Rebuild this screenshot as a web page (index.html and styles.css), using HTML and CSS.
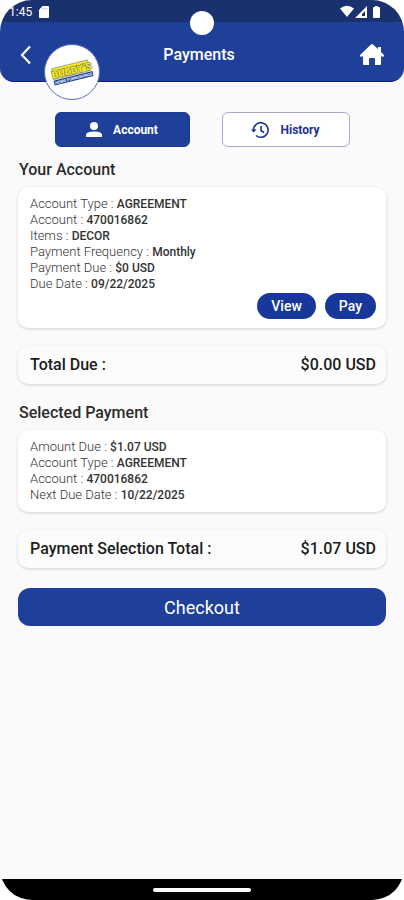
FILE: index.html
```html
<!DOCTYPE html>
<html lang="en">
<head>
<meta charset="utf-8">
<meta name="viewport" content="width=device-width, initial-scale=1">
<title>Payments</title>
<link rel="stylesheet" href="styles.css">
</head>
<body>
<div class="screen">
  <div class="status">
    <span class="clock">1:45</span>
    <svg class="sd" width="10" height="12" viewBox="0 0 11 13" aria-hidden="true"><path fill="#fff" d="M4 0h6q1 0 1 1v11q0 1-1 1H1q-1 0-1-1V4z"/><path stroke="#b3bdd6" d="M4.500 2v2M6.500 2v2M8.500 2v2"/></svg>
    <svg class="signals" width="42" height="14" viewBox="0 0 42 14" aria-hidden="true">
      <path fill="#fff" d="M0 3.500Q7-2 14 3.500L7 12z"/>
      <path fill="#fff" fill-rule="evenodd" d="M15 13 27 1v12zM22 11h3V6l-3 3z"/>
      <path fill="#fff" d="M35 1h3v1h1q1 0 1 1v9q0 1-1 1h-5q-1 0-1-1V3q0-1 1-1h1z"/>
    </svg>
  </div>
  <span class="camera"></span>
  <header class="bar">
    <button class="icon-btn" type="button" aria-label="Back"><svg width="12" height="20" viewBox="0 0 12 20"><path d="M10 1.500 2 10l8 8.500" fill="none" stroke="#fff" stroke-width="2.200"/></svg></button>
    <h1>Payments</h1>
    <button class="icon-btn" type="button" aria-label="Home"><svg width="24" height="22" viewBox="0 0 24 22"><path fill="#fff" d="M11 .5q1-.8 2 0L18 5V3h3v5l3 3v1.500h-3V20q0 1-1 1h-5v-6q0-1-1-1h-4q-1 0-1 1v6H4q-1 0-1-1v-7.500H0V11z"/></svg></button>
    <div class="logo">
      <svg width="54" height="54" viewBox="0 0 54 54" role="img" aria-label="Buddy's Home Furnishings">
        <g transform="rotate(-14 27 27)">
          <path fill="#183a91" d="M7 31h40v5H7z"/>
          <path fill="#f4e91c" stroke="#9297a0" stroke-width=".8" d="M8 19h37v11H8z"/>
          <text class="brand" x="27" y="29" text-anchor="middle">BUDDY’S</text>
          <text class="tag" x="27" y="35" text-anchor="middle">HOME FURNISHINGS</text>
        </g>
      </svg>
    </div>
  </header>

  <main>
    <nav class="tabs" aria-label="Payment views">
      <button class="tab active" type="button"><svg width="16" height="16" viewBox="0 0 16 16" aria-hidden="true"><circle cx="8" cy="4" r="4" fill="#fff"/><path fill="#fff" d="M0 15v-2q0-3.500 8-3.500t8 3.500v2z"/></svg>Account</button>
      <button class="tab" type="button"><svg width="18" height="18" viewBox="0 0 18 18" aria-hidden="true"><path fill="none" stroke="#1d2f91" stroke-width="1.600" d="M2.500 9A7.300 7.300 0 1 1 5 14.500M10 5v4.500l3 2"/><path fill="#1d2f91" d="M0 8.500h5.500L2.700 11.500z"/></svg>History</button>
    </nav>

    <h2>Your Account</h2>
    <section class="card">
      <dl>
        <div><dt>Account Type :</dt> <dd>AGREEMENT</dd></div>
        <div><dt>Account :</dt> <dd>470016862</dd></div>
        <div><dt>Items :</dt> <dd>DECOR</dd></div>
        <div><dt>Payment Frequency :</dt> <dd>Monthly</dd></div>
        <div><dt>Payment Due :</dt> <dd>$0 USD</dd></div>
        <div><dt>Due Date :</dt> <dd>09/22/2025</dd></div>
      </dl>
      <div class="actions">
        <button class="pill" type="button">View</button>
        <button class="pill" type="button">Pay</button>
      </div>
    </section>
    <section class="card total"><span>Total Due :</span><span>$0.00 USD</span></section>

    <h2>Selected Payment</h2>
    <section class="card">
      <dl>
        <div><dt>Amount Due :</dt> <dd>$1.07 USD</dd></div>
        <div><dt>Account Type :</dt> <dd>AGREEMENT</dd></div>
        <div><dt>Account :</dt> <dd>470016862</dd></div>
        <div><dt>Next Due Date :</dt> <dd>10/22/2025</dd></div>
      </dl>
    </section>
    <section class="card total"><span>Payment Selection Total :</span><span>$1.07 USD</span></section>
    <button class="checkout" type="button">Checkout</button>
  </main>

  <div class="home-area"><span class="handle"></span></div>
</div>
</body>
</html>
```

FILE: styles.css
```css
* { box-sizing: border-box; }
body {
  margin: 0;
  background: #fff;
  color: #1c1c1c;
  font-family: Roboto, "Liberation Sans", sans-serif;
}
button { border: 0; padding: 0; font-family: inherit; cursor: pointer; }
h1, h2, dl, dd { margin: 0; }
svg { display: block; flex: none; }

.screen {
  position: relative;
  display: flex;
  flex-direction: column;
  min-height: 100vh;
  overflow: hidden;
  border-radius: 32px;
  background: #fafafa;
}
.status {
  display: flex;
  align-items: center;
  height: 22px;
  padding: 2px 22px 0 9px;
  background: #19316e;
  color: #fff;
}
.clock { font-size: 12px; line-height: 16px; }
.sd { margin-left: 7px; }
.signals { margin-left: auto; }
.camera {
  position: absolute;
  top: 11px;
  left: 50%;
  z-index: 2;
  width: 24px;
  height: 24px;
  margin-left: -12px;
  border-radius: 50%;
  background: #fff;
}
.bar {
  position: relative;
  display: flex;
  align-items: center;
  justify-content: space-between;
  height: 60px;
  padding: 6px 20px 0;
  border-bottom: 1px solid #10188c;
  border-radius: 0 0 14px 14px;
  background: #1e4098;
  color: #fff;
}
.icon-btn { display: flex; justify-content: center; background: none; }
h1 {
  position: absolute;
  left: 0;
  right: 6px;
  text-align: center;
  font-size: 16px;
  font-weight: 500;
  line-height: 20px;
  pointer-events: none;
}
.logo {
  position: absolute;
  top: 22px;
  left: 44px;
  width: 56px;
  height: 56px;
  overflow: hidden;
  border: 1px solid #5a6db0;
  border-radius: 50%;
  background: #fff;
}
.brand { font: 900 10px Roboto, sans-serif; fill: #f4e91c; stroke: #666b62; stroke-width: 1px; paint-order: stroke; }
.tag { font: 700 4px Roboto, sans-serif; fill: #fff; }

main { flex: 1; padding: 30px 18px 24px; }
.tabs { display: flex; justify-content: center; gap: 32px; margin-bottom: 12px; }
.tab {
  display: flex;
  align-items: center;
  justify-content: center;
  gap: 11px;
  width: 128px;
  height: 35px;
  border: 1px solid #a6abcf;
  border-radius: 6px;
  background: #fff;
  color: #1d2f91;
  font-size: 12px;
  font-weight: 700;
}
.tab.active { width: 135px; border-color: #1a3a97; background: #1e4098; color: #fff; }

h2 {
  margin-bottom: 6px;
  padding-left: 1px;
  font-size: 16px;
  font-weight: 500;
  line-height: 22px;
  color: #2b2b2b;
}
.card {
  margin-bottom: 18px;
  padding: 9px 10px 9px 12px;
  border-radius: 10px;
  background: #fff;
  box-shadow: 0 1px 3px rgba(0, 0, 0, .17);
}
dl { font-size: 13px; line-height: 16px; }
dl div { height: 16px; }
dt, dd { display: inline; }
dt { color: #333; font-weight: 300; }
dd { color: #333; font-size: 12px; font-weight: 500; }
.actions { display: flex; justify-content: flex-end; gap: 9px; margin-top: 1px; }
.pill {
  height: 26px;
  padding: 0 14px;
  border-radius: 13px;
  background: #17379a;
  color: #fff;
  font-size: 14px;
  font-weight: 500;
}
.total {
  display: flex;
  justify-content: space-between;
  background: #fcfcfc;
  font-size: 16px;
  font-weight: 500;
  line-height: 20px;
}
.checkout {
  display: block;
  width: 100%;
  height: 38px;
  margin-top: 20px;
  border-radius: 12px;
  background: #1e4098;
  color: #fff;
  font-size: 18px;
}
.home-area {
  display: flex;
  align-items: center;
  justify-content: center;
  height: 21px;
  background: #000;
}
.handle { width: 98px; height: 4px; border-radius: 2px; background: #fff; }
```
